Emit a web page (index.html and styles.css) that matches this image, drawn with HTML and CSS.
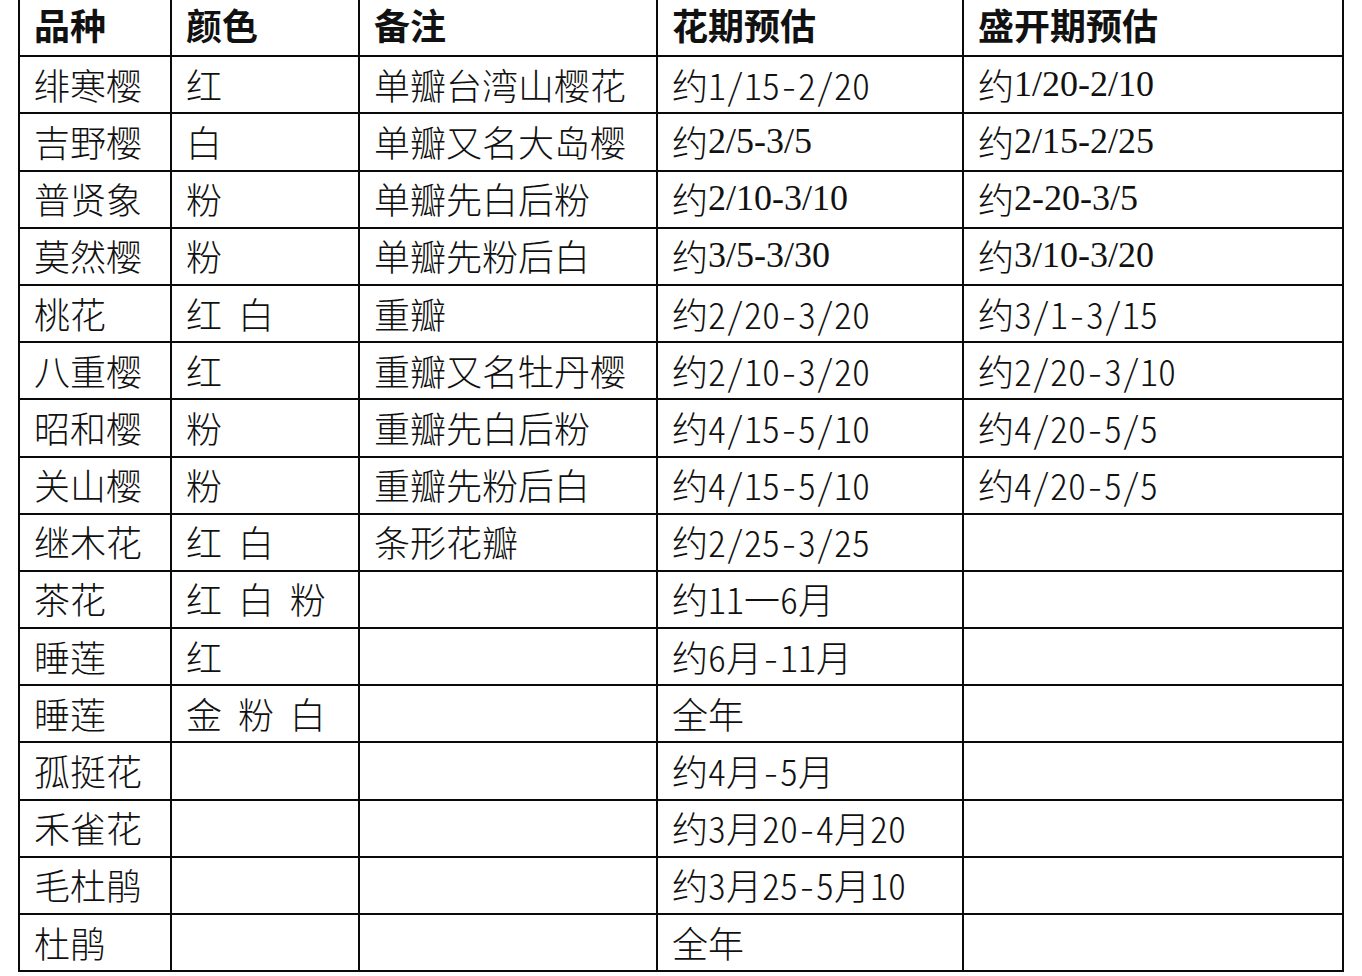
FILE: index.html
```html
<!DOCTYPE html>
<html lang="zh-CN">
<head>
<meta charset="utf-8">
<title>花期表</title>
<link rel="stylesheet" href="styles.css">
</head>
<body>
<div class="sheet">
  <div class="grid">
    <div class="cell head">品种</div><div class="cell head">颜色</div><div class="cell head">备注</div><div class="cell head">花期预估</div><div class="cell head">盛开期预估</div>

    <div class="cell">绯寒樱</div><div class="cell">红</div><div class="cell">单瓣台湾山樱花</div><div class="cell">约<span class="m">1/15-2/20</span></div><div class="cell">约<span class="t">1/20-2/10</span></div>
    <div class="cell">吉野樱</div><div class="cell">白</div><div class="cell">单瓣又名大岛樱</div><div class="cell">约<span class="t">2/5-3/5</span></div><div class="cell">约<span class="t">2/15-2/25</span></div>
    <div class="cell">普贤象</div><div class="cell">粉</div><div class="cell">单瓣先白后粉</div><div class="cell">约<span class="t">2/10-3/10</span></div><div class="cell">约<span class="t">2-20-3/5</span></div>
    <div class="cell">莫然樱</div><div class="cell">粉</div><div class="cell">单瓣先粉后白</div><div class="cell">约<span class="t">3/5-3/30</span></div><div class="cell">约<span class="t">3/10-3/20</span></div>
    <div class="cell">桃花</div><div class="cell">红&nbsp;&nbsp;白</div><div class="cell">重瓣</div><div class="cell">约<span class="m">2/20-3/20</span></div><div class="cell">约<span class="m">3/1-3/15</span></div>
    <div class="cell">八重樱</div><div class="cell">红</div><div class="cell">重瓣又名牡丹樱</div><div class="cell">约<span class="m">2/10-3/20</span></div><div class="cell">约<span class="m">2/20-3/10</span></div>
    <div class="cell">昭和樱</div><div class="cell">粉</div><div class="cell">重瓣先白后粉</div><div class="cell">约<span class="m">4/15-5/10</span></div><div class="cell">约<span class="m">4/20-5/5</span></div>
    <div class="cell">关山樱</div><div class="cell">粉</div><div class="cell">重瓣先粉后白</div><div class="cell">约<span class="m">4/15-5/10</span></div><div class="cell">约<span class="m">4/20-5/5</span></div>
    <div class="cell">继木花</div><div class="cell">红&nbsp;&nbsp;白</div><div class="cell">条形花瓣</div><div class="cell">约<span class="m">2/25-3/25</span></div><div class="cell"></div>
    <div class="cell">茶花</div><div class="cell">红&nbsp;&nbsp;白&nbsp;&nbsp;粉</div><div class="cell"></div><div class="cell">约<span class="m">11</span>一<span class="m">6</span>月</div><div class="cell"></div>
    <div class="cell">睡莲</div><div class="cell">红</div><div class="cell"></div><div class="cell">约<span class="m">6</span>月<span class="m">-11</span>月</div><div class="cell"></div>
    <div class="cell">睡莲</div><div class="cell">金&nbsp;&nbsp;粉&nbsp;&nbsp;白</div><div class="cell"></div><div class="cell">全年</div><div class="cell"></div>
    <div class="cell">孤挺花</div><div class="cell"></div><div class="cell"></div><div class="cell">约<span class="m">4</span>月<span class="m">-5</span>月</div><div class="cell"></div>
    <div class="cell">禾雀花</div><div class="cell"></div><div class="cell"></div><div class="cell">约<span class="m">3</span>月<span class="m">20-4</span>月<span class="m">20</span></div><div class="cell"></div>
    <div class="cell">毛杜鹃</div><div class="cell"></div><div class="cell"></div><div class="cell">约<span class="m">3</span>月<span class="m">25-5</span>月<span class="m">10</span></div><div class="cell"></div>
    <div class="cell">杜鹃</div><div class="cell"></div><div class="cell"></div><div class="cell">全年</div><div class="cell"></div>
  </div>
</div>
</body>
</html>
```
FILE: styles.css
```css
html, body {
  margin: 0;
  padding: 0;
  background: #ffffff;
}
body {
  width: 1362px;
  height: 976px;
  overflow: hidden;
  font-family: "Noto Sans CJK SC", "Liberation Sans", sans-serif;
  color: #111111;
}
.sheet {
  padding-left: 18px;
  margin-top: -2px;
}
.grid {
  display: grid;
  grid-template-columns: 152px 188px 298px 306px 380px;
  grid-auto-rows: 57.2px;
  width: max-content;
  border-left: 2px solid #0a0a0a;
  border-top: 2px solid #0a0a0a;
}
.cell {
  box-sizing: border-box;
  border-right: 2px solid #0a0a0a;
  border-bottom: 2px solid #0a0a0a;
  display: flex;
  align-items: center;
  padding-left: 14px;
  padding-bottom: 2px;
  font-size: 36px;
  font-weight: 300;
  line-height: 1;
  white-space: nowrap;
}
.head {
  font-weight: 700;
  padding-bottom: 7px;
}
.t {
  font-family: "Liberation Serif", serif;
}
.m {
  font-family: "Noto Sans CJK SC", monospace;
  font-feature-settings: "hwid" 1;
  font-weight: 300;
}
```
